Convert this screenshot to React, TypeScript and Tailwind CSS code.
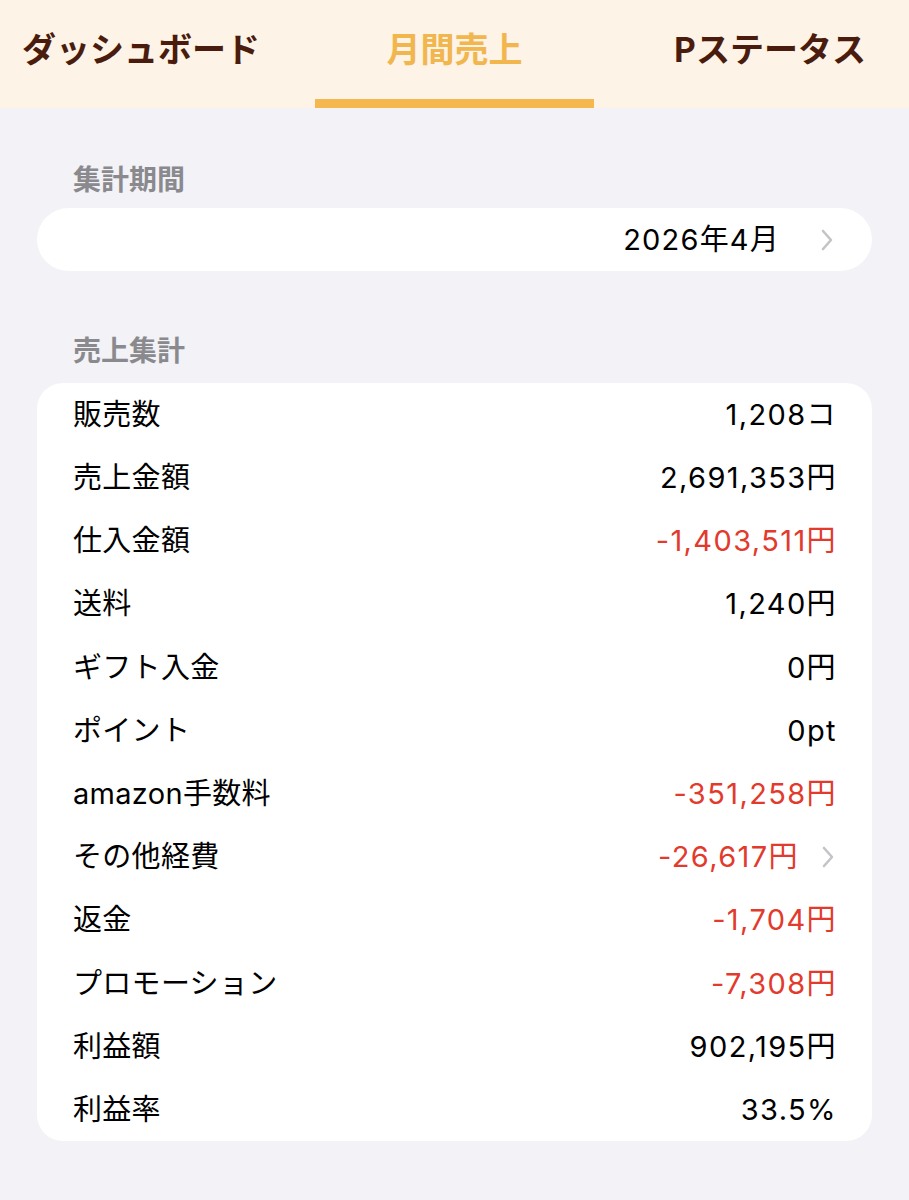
type Row = {
  label: string;
  value: string;
  negative?: boolean;
  link?: boolean;
};

const rows: Row[] = [
  { label: "販売数", value: "1,208コ" },
  { label: "売上金額", value: "2,691,353円" },
  { label: "仕入金額", value: "-1,403,511円", negative: true },
  { label: "送料", value: "1,240円" },
  { label: "ギフト入金", value: "0円" },
  { label: "ポイント", value: "0pt" },
  { label: "amazon手数料", value: "-351,258円", negative: true },
  { label: "その他経費", value: "-26,617円", negative: true, link: true },
  { label: "返金", value: "-1,704円", negative: true },
  { label: "プロモーション", value: "-7,308円", negative: true },
  { label: "利益額", value: "902,195円" },
  { label: "利益率", value: "33.5%" },
];

const font = { fontFamily: 'Inter, "Noto Sans CJK JP", sans-serif' };

function Chevron({ className }: { className?: string }) {
  return (
    <svg viewBox="0 0 14 24" className={className} fill="none" stroke="currentColor" strokeWidth={2.6} strokeLinecap="round" strokeLinejoin="round">
      <polyline points="3,3 11,12 3,21" />
    </svg>
  );
}

function Tabs() {
  return (
    <div className="grid grid-cols-3 h-[108px] bg-[#fdf3e6] text-[34px] font-bold" style={{ fontFamily: '"Noto Sans CJK JP", sans-serif' }}>
      <div className="flex items-center pl-[22px] pb-[14px] text-[#4a1c0e] whitespace-nowrap">ダッシュボード</div>
      <div className="relative flex items-center justify-center pb-[14px] text-[#f2b64e]">
        月間売上
        <div className="absolute bottom-0 left-[12px] right-[12px] h-[9px] bg-[#f4b84f]" />
      </div>
      <div className="flex items-center justify-end pr-[43px] pb-[14px] text-[#4a1c0e] whitespace-nowrap">Pステータス</div>
    </div>
  );
}

export default function App() {
  return (
    <div className="min-h-[1200px] bg-[#f2f2f7]" style={font}>
      <Tabs />
      <div className="px-[37px]">
        <div className="pt-[58px] pb-[14px] pl-[36px] text-[28px] font-semibold text-[#8a8a8e] leading-[28px]">集計期間</div>
        <div className="flex items-center justify-end h-[63px] rounded-[32px] bg-white pr-[38px] text-[29px] tracking-[1.2px] text-black">
          <span>2026年4月</span>
          <Chevron className="ml-[40px] w-[14px] h-[24px] text-[#c4c4c6]" />
        </div>
        <div className="pt-[66px] pb-[18px] pl-[36px] text-[28px] font-semibold text-[#8a8a8e] leading-[28px]">売上集計</div>
        <div className="rounded-[26px] bg-white">
          {rows.map((r) => (
            <div key={r.label} className="flex items-center justify-between h-[63.2px] pl-[36px] pr-[35px] text-[29px]">
              <span className="text-black tracking-[0.3px]">{r.label}</span>
              <span className={`flex items-center tracking-[1.4px] ${r.negative ? "text-[#e23a2c]" : "text-black"}`}>
                {r.value}
                {r.link && <Chevron className="ml-[22px] mr-[2px] w-[14px] h-[24px] text-[#c4c4c6]" />}
              </span>
            </div>
          ))}
        </div>
      </div>
    </div>
  );
}
